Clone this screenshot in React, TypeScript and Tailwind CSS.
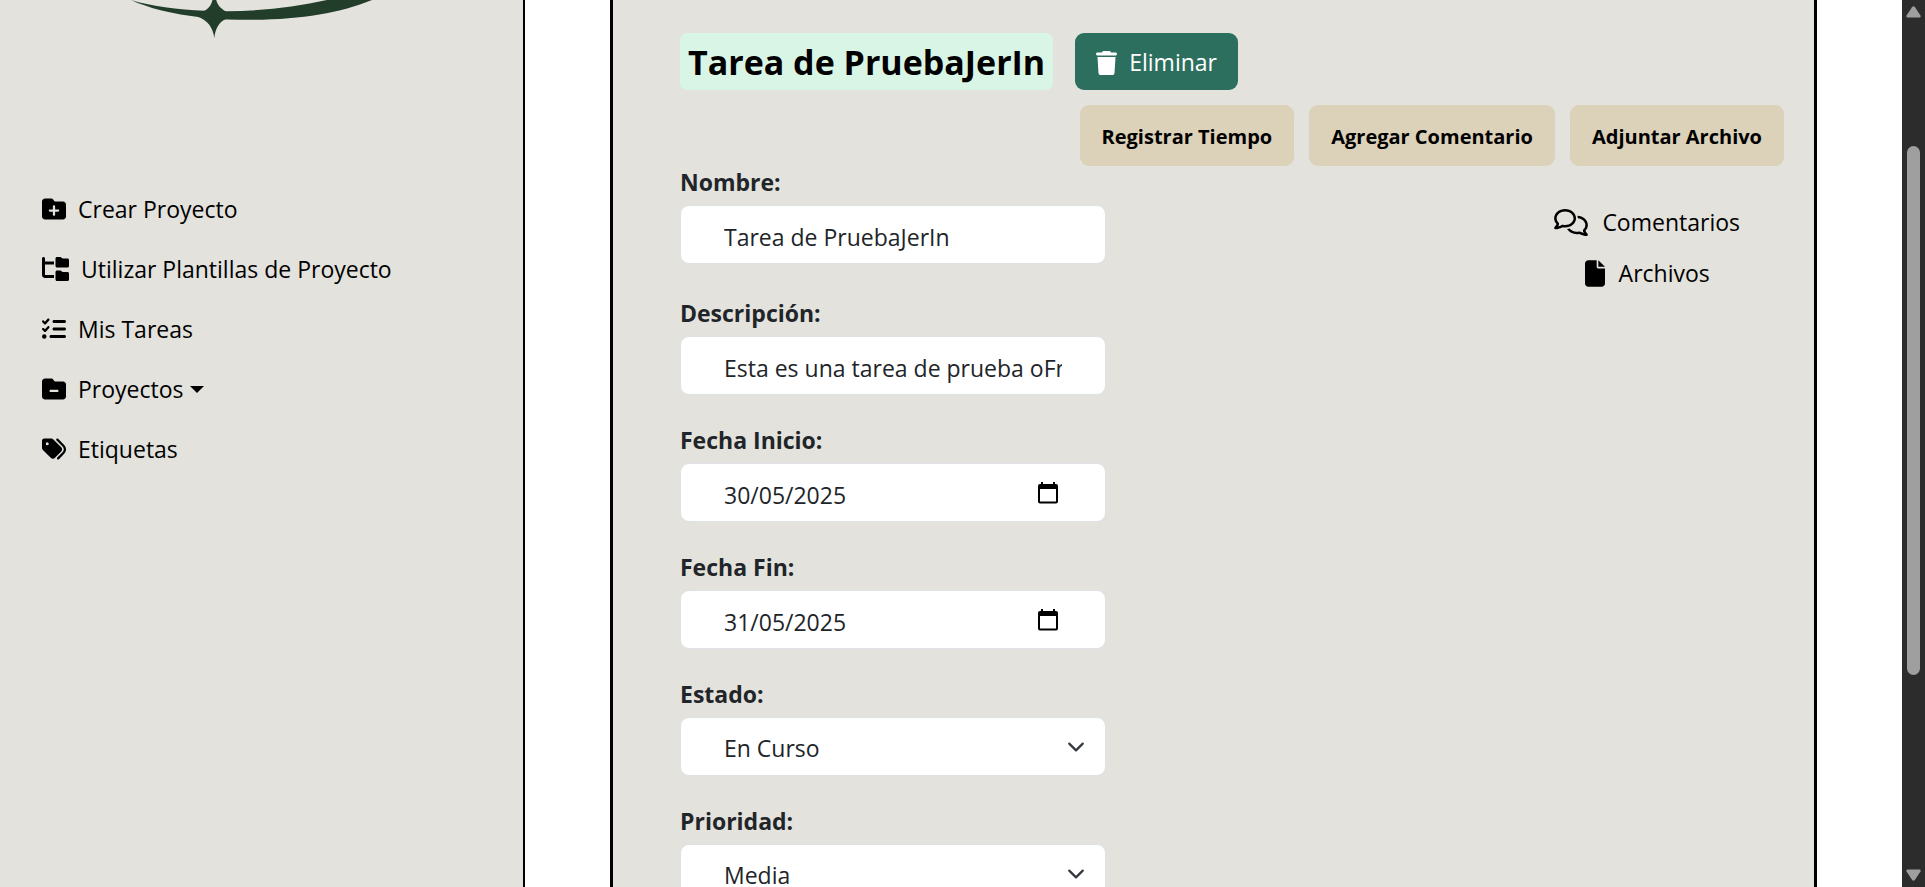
import type { ReactNode } from "react";
import {
  FaFile,
  FaFolderMinus,
  FaFolderPlus,
  FaFolderTree,
  FaListCheck,
  FaRegComments,
  FaTags,
  FaTrash,
} from "react-icons/fa6";

const fieldBox =
  "block h-[59px] w-full rounded-[9px] border border-[#dee2e6] bg-white px-[43px] pt-1 text-[23px] text-[#212529] outline-none";

function Logo() {
  return (
    <svg viewBox="120 0 260 40" className="ml-[120px] h-10 w-[260px]" fill="#233d2b" aria-hidden="true">
      <path d="M131 0C150 6 178 10 205 10.700L227 11.300C262 11 296 7 327 0H372C335 15 288 21.500 227 19.500L202 17.500C172 14 148 8 131 0Z" />
      <path d="M212.500 0H216.200C217.500 5 221 9 226 11.500V19C219 22 215.500 28 214.300 38C213 28 208 20 197 16.500L204 11C208 9 211.500 5 212.500 0Z" />
    </svg>
  );
}

function NavItem({ icon, children }: { icon: ReactNode; children: ReactNode }) {
  return (
    <li>
      <a href="#" className="flex h-[60px] items-center gap-3">
        {icon}
        <span className="flex items-center gap-[6px]">{children}</span>
      </a>
    </li>
  );
}

function Field({ id, label, children }: { id: string; label: string; children: ReactNode }) {
  return (
    <div className="mb-[29px]">
      <label htmlFor={id} className="mb-[7px] block h-8 text-[23px] leading-8 font-bold text-[#212529]">
        {label}
      </label>
      {children}
    </div>
  );
}

function DateField({ id, label, value }: { id: string; label: string; value: string }) {
  return (
    <Field id={id} label={label}>
      <div className="relative">
        <input id={id} type="text" defaultValue={value} className={fieldBox} />
        <button
          type="button"
          aria-label={`Abrir calendario: ${label}`}
          className="absolute inset-y-0 right-12 flex items-center"
        >
          <svg viewBox="0 0 20 22" className="h-[22px] w-5">
            <path
              fillRule="evenodd"
              d="M3 0H5V2H15V0H17V2H18a2 2 0 0 1 2 2V19.500a2 2 0 0 1-2 2H2a2 2 0 0 1-2-2V4A2 2 0 0 1 2 2H3ZM2 7V19.500H18V7Z"
            />
          </svg>
        </button>
      </div>
    </Field>
  );
}

function SelectField({ id, label, options }: { id: string; label: string; options: string[] }) {
  return (
    <Field id={id} label={label}>
      <div className="relative">
        <select id={id} className={`${fieldBox} appearance-none`}>
          {options.map((option) => (
            <option key={option}>{option}</option>
          ))}
        </select>
        <svg
          viewBox="0 0 16 16"
          className="pointer-events-none absolute inset-y-0 right-[21px] my-auto size-[18px]"
          fill="none"
          stroke="#343a40"
          strokeWidth="2"
          strokeLinecap="round"
          strokeLinejoin="round"
        >
          <path d="m2 5 6 6 6-6" />
        </svg>
      </div>
    </Field>
  );
}

function ActionButton({ children }: { children: ReactNode }) {
  return (
    <button type="button" className="h-[61px] rounded-[9px] bg-[#dcd1b9] px-[22px] pt-[2px] text-[20px] font-bold">
      {children}
    </button>
  );
}

function ScrollTrack() {
  return (
    <div className="flex w-[23px] shrink-0 flex-col items-center bg-[#2c2c2c] py-[6px]" aria-hidden="true">
      <svg viewBox="0 0 15 12" className="h-3 w-[15px]" fill="#9f9f9f">
        <path d="M6 1.200Q7.500-.500 9 1.200L14.500 9.500Q15 11.500 13.500 11.500H1.500Q0 11.500 .5 9.500Z" />
      </svg>
      <div className="mt-32 h-[529px] w-[13px] rounded-full bg-[#9f9f9f]" />
      <svg viewBox="0 0 15 12" className="mt-auto h-3 w-[15px]" fill="#9f9f9f">
        <path d="M6 10.800Q7.500 12.500 9 10.800L14.500 2.500Q15 .5 13.500 .5H1.500Q0 .5 .5 2.500Z" />
      </svg>
    </div>
  );
}

export default function App() {
  return (
    <div className="flex h-screen overflow-hidden bg-white font-['Open_Sans','Noto_Sans',sans-serif] text-[23px] text-black">
      <aside className="w-[525px] shrink-0 border-r-2 border-black bg-[#e3e2dc]">
        <Logo />
        <nav className="mt-[139px] pl-[42px]">
          <ul>
            <NavItem icon={<FaFolderPlus className="size-6" />}>Crear Proyecto</NavItem>
            <NavItem icon={<FaFolderTree className="h-6 w-[27px]" />}>Utilizar Plantillas de Proyecto</NavItem>
            <NavItem icon={<FaListCheck className="size-6" />}>Mis Tareas</NavItem>
            <NavItem icon={<FaFolderMinus className="size-6" />}>
              Proyectos
              <svg viewBox="0 0 14 7" className="h-[7px] w-[14px]">
                <path d="M0 0H14L7 7Z" />
              </svg>
            </NavItem>
            <NavItem icon={<FaTags className="size-6" />}>Etiquetas</NavItem>
          </ul>
        </nav>
      </aside>

      <main className="mx-[85px] min-w-0 flex-1 self-start border-x-3 border-black bg-[#e3e2dc] pt-[33px] pr-[30px] pl-[67px]">
        <div className="flex items-center gap-[22px]">
          <h1 className="flex h-[57px] items-center rounded-[7px] bg-[#d9f5e5] px-2 pt-[2px] text-[34px] font-bold">
            Tarea de PruebaJerIn
          </h1>
          <button
            type="button"
            className="flex h-[57px] items-center gap-3 rounded-[9px] bg-[#2d6f5e] px-[21px] pt-[2px] text-white"
          >
            <FaTrash className="h-6 w-[21px]" />
            Eliminar
          </button>
        </div>

        <div className="mt-[15px] flex justify-end gap-[15px]">
          <ActionButton>Registrar Tiempo</ActionButton>
          <ActionButton>Agregar Comentario</ActionButton>
          <ActionButton>Adjuntar Archivo</ActionButton>
        </div>

        <div className="flex items-start justify-between">
          <form className="w-[426px]">
            <Field id="nombre" label="Nombre:">
              <input id="nombre" type="text" defaultValue="Tarea de PruebaJerIn" className={fieldBox} />
            </Field>
            <div className="mt-[33px]">
              <Field id="descripcion" label="Descripción:">
                <input
                  id="descripcion"
                  type="text"
                  defaultValue="Esta es una tarea de prueba oFm"
                  className={fieldBox}
                />
              </Field>
            </div>
            <DateField id="fecha-inicio" label="Fecha Inicio:" value="30/05/2025" />
            <DateField id="fecha-fin" label="Fecha Fin:" value="31/05/2025" />
            <SelectField id="estado" label="Estado:" options={["En Curso"]} />
            <SelectField id="prioridad" label="Prioridad:" options={["Media"]} />
          </form>

          <div className="mt-[31px] mr-11 flex flex-col items-center">
            <a href="#" className="flex h-[51px] items-center gap-[14px]">
              <FaRegComments className="h-[27px] w-[34px]" />
              Comentarios
            </a>
            <a href="#" className="flex h-[51px] items-center gap-[14px]">
              <FaFile className="h-[27px] w-5" />
              Archivos
            </a>
          </div>
        </div>
      </main>

      <ScrollTrack />
    </div>
  );
}
